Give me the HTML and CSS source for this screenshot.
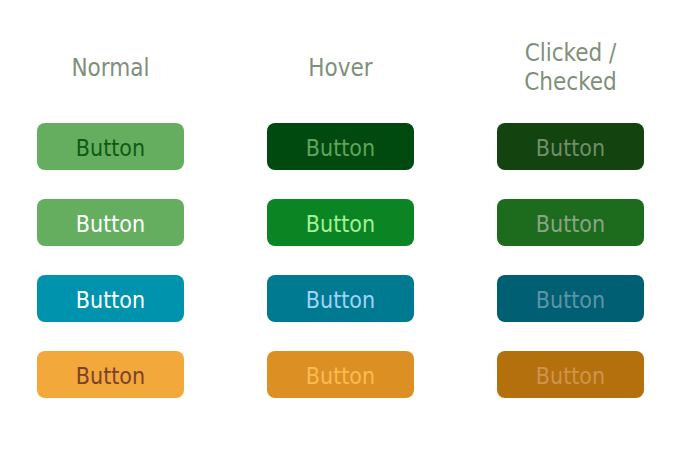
FILE: index.html
```html
<!DOCTYPE html>
<html>
<head>
<meta charset="utf-8">
<link rel="stylesheet" href="styles.css">
</head>
<body>
<div class="board">
  <div class="head">Normal</div>
  <div class="head">Hover</div>
  <div class="head">Clicked /<br>Checked</div>

  <div class="btn r1n">Button</div>
  <div class="btn r1h">Button</div>
  <div class="btn r1c">Button</div>

  <div class="btn r2n">Button</div>
  <div class="btn r2h">Button</div>
  <div class="btn r2c">Button</div>

  <div class="btn r3n">Button</div>
  <div class="btn r3h">Button</div>
  <div class="btn r3c">Button</div>

  <div class="btn r4n">Button</div>
  <div class="btn r4h">Button</div>
  <div class="btn r4c">Button</div>
</div>
</body>
</html>
```

FILE: styles.css
```css
html, body {
  margin: 0;
  background: #ffffff;
}
body {
  font-family: "DejaVu Sans Condensed", "DejaVu Sans", sans-serif;
  font-stretch: condensed;
}
.board {
  display: grid;
  grid-template-columns: repeat(3, 147px);
  grid-template-rows: 57px repeat(4, 47px);
  column-gap: 83px;
  row-gap: 29px;
  padding: 37px 0 0 37px;
}
.head {
  display: flex;
  align-items: center;
  justify-content: center;
  text-align: center;
  font-size: 24px;
  line-height: 29px;
  padding-top: 5px;
  color: #7f907a;
}
.btn {
  display: flex;
  align-items: center;
  justify-content: center;
  border-radius: 8px;
  font-size: 23px;
  padding-top: 3px;
}
.r1n { background: #66ae5f; color: #0e5a14; }
.r1h { background: #004a0f; color: #5fa55a; }
.r1c { background: #13430f; color: #6f8f6a; }
.r2n { background: #66ae5f; color: #ffffff; }
.r2h { background: #0b8423; color: #a5f09a; }
.r2c { background: #1d6b1d; color: #8aa585; }
.r3n { background: #0093ae; color: #ffffff; }
.r3h { background: #007a90; color: #9fd4f9; }
.r3c { background: #005f72; color: #5e94a5; }
.r4n { background: #f3a83c; color: #7a4030; }
.r4h { background: #dc9024; color: #fbbb52; }
.r4c { background: #b4700c; color: #cf9450; }
```
